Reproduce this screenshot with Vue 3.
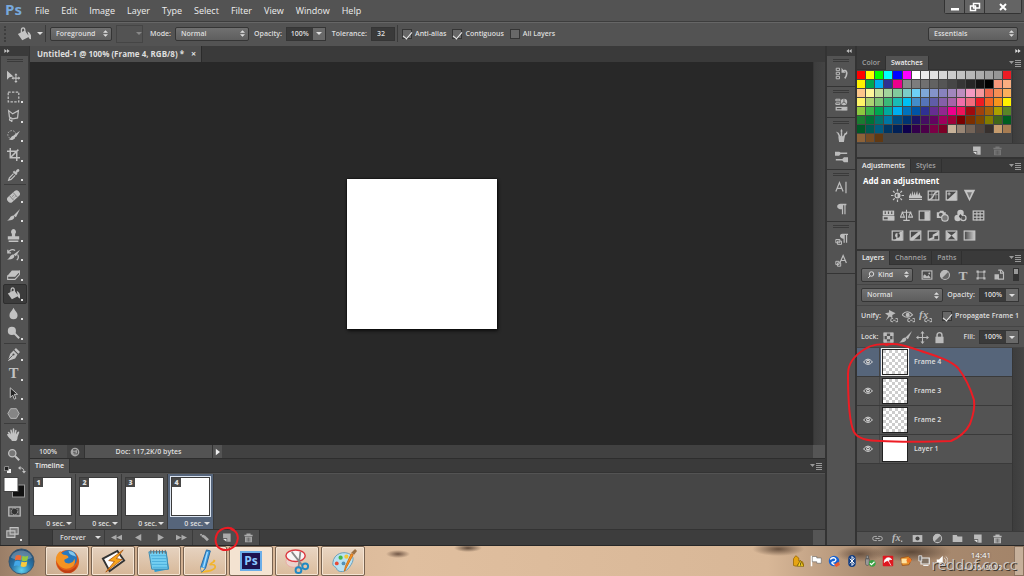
<template>
  <div class="app">
    <header class="menubar">
      <span class="brand">Ps</span>
      <nav class="menus">
        <button v-for="item in menus" :key="item">{{ item }}</button>
      </nav>
      <div class="window-buttons">
        <button aria-label="Minimize"><svg viewBox="0 0 12 10"><path d="M2 6h8v2.500H2z" fill="#fff" /></svg></button>
        <button aria-label="Restore"><svg viewBox="0 0 12 10"><path d="M4.500 1.500h6v4.500h-6zM1.500 4h5v4.500h-5z" fill="#535353" stroke="#fff" stroke-width="1.500" /></svg></button>
        <button class="close" aria-label="Close"><svg viewBox="0 0 12 10"><path d="M3 2l6 6M9 2L3 8" stroke="#fff" stroke-width="2" /></svg></button>
      </div>
    </header>

    <section class="options">
      <span class="dots"></span>
      <button class="current-tool" aria-label="Paint bucket">
        <svg viewBox="0 0 16 16" v-html="icons.bucket"></svg>
        <i class="caret"></i>
      </button>
      <span class="divider"></span>
      <span class="select source">
        <select aria-label="Fill source"><option>Foreground</option></select>
        <svg viewBox="0 0 6 8" v-html="icons.updown"></svg>
      </span>
      <button class="pattern" aria-label="Pattern" disabled><i class="caret"></i></button>
      <label for="mode">Mode:</label>
      <span class="select mode">
        <select id="mode"><option>Normal</option></select>
        <svg viewBox="0 0 6 8" v-html="icons.updown"></svg>
      </span>
      <label for="opacity">Opacity:</label>
      <span class="amount">
        <input id="opacity" v-model="opacity" type="text">
        <button aria-label="Change opacity"><i class="caret"></i></button>
      </span>
      <label for="tolerance">Tolerance:</label>
      <input id="tolerance" v-model="tolerance" class="tolerance" type="text">
      <span class="divider"></span>
      <label v-for="check in checks" :key="check.name" class="check">
        <input v-model="check.on" type="checkbox">{{ check.name }}
      </label>
      <span class="select workspace">
        <select aria-label="Workspace"><option>Essentials</option></select>
        <svg viewBox="0 0 6 8" v-html="icons.updown"></svg>
      </span>
    </section>

    <main class="workspace-area">
      <aside class="toolbar">
        <div class="panel-head left"><svg viewBox="0 0 8 6" v-html="icons.right"></svg></div>
        <span class="grip"></span>
        <div class="tools">
          <template v-for="(group, i) in tools" :key="i">
            <hr v-if="i">
            <button
              v-for="tool in group"
              :key="tool"
              :class="{ active: tool === activeTool }"
              :aria-label="tool"
              @click="activeTool = tool"
            >
              <svg viewBox="0 0 16 16" v-html="icons[tool]"></svg>
              <i class="more" :class="{ none: tool === 'move' || tool === 'zoom' }"></i>
            </button>
          </template>
        </div>
        <div class="colors">
          <div class="color-tools">
            <svg viewBox="0 0 16 16" v-html="icons.defaults"></svg>
            <svg viewBox="0 0 16 16" v-html="icons.swap"></svg>
          </div>
          <svg class="color-pair" viewBox="0 0 24 24">
            <rect x="9.500" y="8.500" width="12" height="12" fill="#111" stroke="#999" />
            <rect x="1" y="1" width="14" height="14" fill="#fff" stroke="#444" />
          </svg>
          <button aria-label="Quick mask"><svg viewBox="0 0 16 16" v-html="icons.mask"></svg></button>
          <button aria-label="Screen mode"><svg viewBox="0 0 16 16" v-html="icons.screen"></svg><i class="more"></i></button>
        </div>
      </aside>

      <section class="center">
        <div class="doc-tabs">
          <div class="doc-tab">Untitled-1 @ 100% (Frame 4, RGB/8) * <button aria-label="Close document">×</button></div>
        </div>
        <div class="document">
          <div class="stage"><div class="canvas"></div></div>
          <div class="scroll-y"></div>
        </div>
        <div class="status">
          <span class="zoom-level">100%</span>
          <svg class="status-icon" viewBox="0 0 16 16"><circle cx="8" cy="8" r="7" fill="#a5a5a5" /><path d="M5 4h5l2 2v5H6M5 6h4M5 9h4" fill="none" stroke="#555" stroke-width="1.500" /></svg>
          <span class="doc-size">Doc: 117,2K/0 bytes</span>
          <button aria-label="Status options"><svg viewBox="0 0 6 8"><path d="M1 0l5 4-5 4z" fill="#eee" /></svg></button>
          <span class="corner"></span>
        </div>

        <div class="timeline">
          <div class="tabs">
            <button class="tab on">Timeline</button>
            <svg class="menu-icon" viewBox="0 0 12 8" v-html="icons.menu"></svg>
          </div>
          <div class="frames">
            <button
              v-for="n in 4"
              :key="n"
              class="frame"
              :class="{ selected: n === activeFrame }"
              @click="activeFrame = n"
            >
              <span class="frame-thumb"><b>{{ n }}</b></span>
              <span class="delay">0 sec.<i class="caret"></i></span>
            </button>
          </div>
          <div class="playback">
            <div class="controls">
              <button class="loop">Forever <i class="caret"></i></button>
              <button v-for="name in playback" :key="name" :class="name" :aria-label="name">
                <svg viewBox="0 0 16 16" v-html="icons[name]"></svg>
                <svg v-if="name === 'page'" class="mark" viewBox="0 0 26 26">
                  <path d="M20 4C15 0 6 2 3 8C0 14 2 21 7 23C13 26 21 22 23 16C25 10 23 5 17 3" />
                </svg>
              </button>
            </div>
            <span class="corner"></span>
          </div>
        </div>
      </section>

      <aside class="dock">
        <div class="panel-head"><svg viewBox="0 0 8 6" v-html="icons.left"></svg></div>
        <div v-for="(group, i) in dock" :key="i" class="dock-group">
          <span class="grip"></span>
          <button v-for="name in group" :key="name" :aria-label="name">
            <svg viewBox="0 0 16 16" v-html="icons[name]"></svg>
          </button>
        </div>
      </aside>

      <aside class="panels">
        <div class="panel-head"><svg viewBox="0 0 8 6" v-html="icons.right"></svg></div>

        <section class="panel">
          <div class="tabs">
            <button class="tab">Color</button>
            <button class="tab on">Swatches</button>
            <svg class="menu-icon" viewBox="0 0 12 8" v-html="icons.menu"></svg>
          </div>
          <div class="swatch-area">
            <div class="swatches">
              <i v-for="(color, i) in swatches" :key="i" :style="{ background: color }"></i>
            </div>
            <div class="scroll-y"></div>
          </div>
          <div class="panel-foot">
            <button aria-label="New swatch"><svg viewBox="0 0 16 16" v-html="icons.page"></svg></button>
            <button class="dim" aria-label="Delete swatch"><svg viewBox="0 0 16 16" v-html="icons.trash"></svg></button>
          </div>
        </section>

        <section class="panel">
          <div class="tabs">
            <button class="tab on">Adjustments</button>
            <button class="tab">Styles</button>
            <svg class="menu-icon" viewBox="0 0 12 8" v-html="icons.menu"></svg>
          </div>
          <div class="adjustments">
            <h2>Add an adjustment</h2>
            <div v-for="(row, i) in adjustments" :key="i" class="adjust-row">
              <button v-for="name in row" :key="name" :aria-label="name">
                <svg viewBox="0 0 16 16" v-html="icons[name]"></svg>
              </button>
            </div>
          </div>
        </section>

        <section class="panel layers">
          <div class="tabs">
            <button class="tab on">Layers</button>
            <button class="tab">Channels</button>
            <button class="tab">Paths</button>
            <svg class="menu-icon" viewBox="0 0 12 8" v-html="icons.menu"></svg>
          </div>
          <div class="row filters">
            <span class="select kind">
              <svg class="lens" viewBox="0 0 16 16"><circle cx="9" cy="6" r="4.500" fill="none" stroke="#ddd" stroke-width="2" /><path d="M6 10l-4 4" stroke="#ddd" stroke-width="2" /></svg>
              <select aria-label="Filter type"><option>Kind</option></select>
              <svg viewBox="0 0 6 8" v-html="icons.updown"></svg>
            </span>
            <button v-for="name in filters" :key="name" :aria-label="name">
              <svg viewBox="0 0 16 16" v-html="icons[name]"></svg>
            </button>
            <span class="toggle"></span>
          </div>
          <div class="row">
            <span class="select blend">
              <select aria-label="Blend mode"><option>Normal</option></select>
              <svg viewBox="0 0 6 8" v-html="icons.updown"></svg>
            </span>
            <label class="push" for="layer-opacity">Opacity:</label>
            <span class="amount">
              <input id="layer-opacity" v-model="layerOpacity" type="text">
              <button aria-label="Change layer opacity"><i class="caret"></i></button>
            </span>
          </div>
          <div class="row">
            <span>Unify:</span>
            <button v-for="name in unify" :key="name" :aria-label="name">
              <svg viewBox="0 0 16 16" v-html="icons[name]"></svg>
            </button>
            <label class="check push"><input v-model="propagate" type="checkbox">Propagate Frame 1</label>
          </div>
          <div class="row">
            <span>Lock:</span>
            <button v-for="name in locks" :key="name" :aria-label="name">
              <svg viewBox="0 0 16 16" v-html="icons[name]"></svg>
            </button>
            <label class="push" for="fill">Fill:</label>
            <span class="amount">
              <input id="fill" v-model="fill" type="text">
              <button aria-label="Change fill"><i class="caret"></i></button>
            </span>
          </div>
          <div class="layer-area">
            <ul class="layer-list">
              <li
                v-for="layer in layers"
                :key="layer.name"
                :class="{ selected: layer.name === activeLayer }"
                @click="activeLayer = layer.name"
              >
                <button class="eye" aria-label="Visibility"><svg viewBox="0 0 16 16" v-html="icons.eye"></svg></button>
                <span class="thumb" :class="{ empty: layer.empty }"></span>
                <span>{{ layer.name }}</span>
              </li>
            </ul>
            <div class="scroll-y"></div>
            <svg class="mark layers-mark" viewBox="0 0 132 104">
              <path d="M41 5C52 2 64 7 76 11C91 16 105 20 113 28C120 37 126 50 129 60C130 67 128 76 125 84C121 92 115 97 106 101C85 102 50 102 36 101C24 101 13 99 9 92C4 82 3 50 3 34C3 23 10 15 20 9C27 4 36 4 47 4" />
            </svg>
          </div>
          <div class="panel-foot layer-foot">
            <button v-for="name in layerActions" :key="name" :aria-label="name">
              <svg viewBox="0 0 16 16" v-html="icons[name]"></svg>
            </button>
          </div>
        </section>
      </aside>
    </main>

    <footer class="taskbar">
      <button class="start" aria-label="Start">
        <svg viewBox="0 0 28 28">
          <defs>
            <radialGradient id="orb" cx=".5" cy=".85" r=".8"><stop offset="0" stop-color="#5fd0ee" /><stop offset=".5" stop-color="#2875a9" /><stop offset="1" stop-color="#244b70" /></radialGradient>
          </defs>
          <circle cx="14" cy="14" r="13" fill="url(#orb)" stroke="#38566f" />
          <path d="M3 10C6 0 22 0 25 10C18 13 10 13 3 10z" fill="#fff" opacity=".25" />
          <path d="M8 8c2-1 4-1 6 0l-1 5c-2-1-4-1-6 0z" fill="#ee6835" />
          <path d="M15 8c2 1 4 1 6 0l-1 5c-2 1-4 1-6 0z" fill="#95c83d" />
          <path d="M7 14c2-1 4-1 6 0l-1 5c-2-1-4-1-6 0z" fill="#43a8e8" />
          <path d="M14 14c2 1 4 1 6 0l-1 5c-2 1-4 1-6 0z" fill="#fbc93c" />
        </svg>
      </button>
      <button v-for="name in programs" :key="name" class="program" :class="{ current: name === 'photoshop' }" :aria-label="name">
        <span v-if="name === 'photoshop'" class="ps-tile">Ps</span>
        <svg v-else viewBox="0 0 28 28" v-html="programIcons[name]"></svg>
      </button>
      <div class="tray">
        <svg v-for="(icon, i) in trayIcons" :key="i" viewBox="0 0 16 16" v-html="icon"></svg>
        <time class="clock">14:41<br>14/06/2012</time>
        <span class="show-desktop"></span>
        <span class="watermark">reddof.co.cc</span>
      </div>
    </footer>
  </div>
</template>

<script setup>
  import { ref } from 'vue';

  const menus = ['File', 'Edit', 'Image', 'Layer', 'Type', 'Select', 'Filter', 'View', 'Window', 'Help'];

  const opacity = ref('100%');
  const tolerance = ref('32');
  const layerOpacity = ref('100%');
  const fill = ref('100%');
  const propagate = ref(true);
  const activeTool = ref('bucket');
  const activeFrame = ref(4);
  const activeLayer = ref('Frame 4');

  const checks = ref([
    { name: 'Anti-alias', on: true },
    { name: 'Contiguous', on: true },
    { name: 'All Layers', on: false }
  ]);

  const tools = [
    ['move', 'marquee', 'lasso', 'quick', 'crop', 'dropper'],
    ['heal', 'brush', 'stamp', 'history', 'eraser', 'bucket', 'blur', 'dodge'],
    ['pen', 'type', 'arrow', 'shape'],
    ['hand', 'zoom']
  ];
  const playback = ['first', 'prev', 'play', 'last', 'tween', 'page', 'trash'];
  const dock = [
    ['historyPanel'],
    ['properties'],
    ['brushes', 'presets'],
    ['character', 'paragraph'],
    ['paragraphStyles', 'characterStyles']
  ];
  const adjustments = [
    ['sun', 'levels', 'curves', 'exposure', 'vibrance'],
    ['hue', 'balance', 'blackWhite', 'photoFilter', 'mixer', 'lookup'],
    ['invert', 'posterize', 'threshold', 'selective', 'gradient']
  ];
  const filters = ['image', 'adjust', 'type', 'vector', 'smart'];
  const unify = ['unifyPosition', 'unifyEye', 'unifyFx'];
  const locks = ['checker', 'brush', 'cross', 'lock'];
  const layerActions = ['link', 'fx', 'addMask', 'adjust', 'folder', 'page', 'trash'];

  const layers = [
    { name: 'Frame 4', empty: true },
    { name: 'Frame 3', empty: true },
    { name: 'Frame 2', empty: true },
    { name: 'Layer 1', empty: false }
  ];

  const swatches = `
    ff0000 ffff00 00ff00 00ffff 0000ff ff00ff ffffff ebebeb e1e1e1 d7d7d7 cccccc c2c2c2 b7b7b7 acacac a0a0a0 959595 ed1c24
    fff200 00a651 00aeef 2e3192 ec008c 898989 7d7d7d 707070 626262 555555 464646 363636 262626 111111 000000 f7977a f9ad81
    fdc68a fff79a c4df9b a2d39c 82ca9d 7bcdc8 6ecff6 7ea7d8 8493ca 8882be a187be bc8dbf f49ac2 f6989d f26c4f f68e55 fbaf5c
    fff467 acd372 7cc576 3bb878 1abbb4 00bff3 438cca 5574b9 605ca8 855fa8 a763a8 f06ea9 f26d7d ed1c24 f26522 f7941d fff200
    8dc73f 39b54a 00a651 00a99d 00aeef 0072bc 0054a6 2e3192 662d91 92278f ec008c ed145b 9e0b0f a0410d a36209 aba000 598527
    1a7b30 007236 00746b 0076a3 004b80 003471 1b1464 440e62 630460 9e005d 9e0039 790000 7b2e00 7d4900 827b00 406618 005e20
    005826 005952 005b7f 003663 002157 0d004c 32004b 4b0049 7b0046 7a0026 c7b299 998675 736357 534741 37302d c69c6d a67c52
    8c6239 754c24 603913
  `.trim().split(/\s+/).map((hex) => `#${hex}`);

  const line = (d, width = 1.5) => `<path d="${d}" fill="none" stroke="currentColor" stroke-width="${width}"/>`;
  const solid = (d) => `<path d="${d}" fill="currentColor"/>`;
  const box = '<rect x="1.500" y="2.500" width="13" height="11" fill="#4a4a4a" stroke="currentColor" stroke-width="1.500"/>';
  const links = '<path d="M10 10.500h-1a2 2 0 0 0 0 4h1M13 10.500h1a2 2 0 0 1 0 4h-1M10 12.500h3" fill="none" stroke="currentColor" stroke-width="1.300"/>';
  const glyph = (text, x, y, size, style = '') =>
    `<text x="${x}" y="${y}" font-size="${size}" fill="currentColor" ${style}>${text}</text>`;

  const icons = {
    updown: solid('M0 3l3-3 3 3zM0 5l3 3 3-3z'),
    right: solid('M0 0l4 3-4 3zM4 0l4 3-4 3z'),
    left: solid('M4 0L0 3l4 3zM8 0L4 3l4 3z'),
    menu: solid('M0 2h5L2.500 5z') + line('M6 1.500h6M6 3.500h6M6 5.500h6M6 7.500h6', 1),
    move: solid('M0 1v11l3-3 5-1z') + line('M11 6v8M7 10h8', 1.3) + solid('M11 4l2 2.500H9zM11 16l2-2.500H9zM5.500 10L8 8v4zM16.500 10L14 8v4z'),
    marquee: '<rect x="1.500" y="2.500" width="13" height="12" fill="none" stroke="currentColor" stroke-width="1.500" stroke-dasharray="3 1.600"/>',
    lasso: line('M2 2l5 4 7-4-1 9-6 1-4-2zM5 11c-3 1-2 4 0 3s1 2 0 2'),
    quick: '<circle cx="6" cy="7" r="5" fill="none" stroke="currentColor" stroke-dasharray="2 1.500"/>' + solid('M16 2l-5 8-3-2zM9 8c3 3-1 7-7 5 3-1 3-5 7-5z'),
    crop: line('M4 0v12h12M0 4h12v12M4 12L14 2', 1.8),
    dropper: solid('M10 5l2-3c2-2 4 0 3 2l-3 2 1 1-2 2-4-4 2-2z') + line('M8 7l-5 5-1 3 3-1 5-5'),
    heal: '<g transform="rotate(-42 8 8)"><rect x="-1" y="4" width="18" height="8" rx="3.500" fill="currentColor"/><path d="M5 4v8M11 4v8" stroke="#777"/><path d="M7 7h.8M9 7h.8M7 9.500h.8M9 9.500h.8" stroke="#444"/></g>',
    brush: solid('M16 0l-5 10-3-2zM8 8c3 3-1 7-8 6 4-1 3-6 8-6z'),
    stamp: solid('M8 0a3.500 3.500 0 0 1 2 6v3h5v4H1V9h5V6a3.500 3.500 0 0 1 2-6zM2 14h12v2H2z'),
    history: solid('M16 2l-5 8-3-2zM8 8c3 3-1 7-8 6 4-1 3-6 8-6z') + line('M1 6c2-4 6-5 9-3M1 2v4h4M13 8c2 3 1 5-1 7'),
    eraser: solid('M6 3h10l-6 7H0z') + line('M.8 10h9l5.500-6v4l-5.500 6h-9z', 1.3),
    bucket: solid('M1 8l8-4 5 7-8 4zM12 5c3 1 5 5 4 9-2 0-3-2-3-5z') + line('M5 8V4c0-4 4-4 4 0v4', 1.4),
    blur: solid('M8 1c2 4 5 6 5 9a5 5 0 0 1-10 0c0-3 3-5 5-9z'),
    dodge: '<circle cx="6" cy="6" r="5" fill="currentColor"/>' + line('M9 9l6 6', 2.5),
    pen: solid('M11 0l5 5-2 2-5-5zM8 3l5 5-3 5-9 3 3-9z') + '<path d="M1 15l6-6" stroke="#4a4a4a"/><circle cx="8" cy="8" r="1.300" fill="#4a4a4a"/>',
    type: glyph('T', 8, 14, 18, 'text-anchor="middle" font-family="Liberation Serif, serif"'),
    arrow: '<path d="M4 1v12l3-3 2 5 2-1-2-5h4z" fill="#222" stroke="currentColor" stroke-width="1.200"/>',
    shape: '<path d="M4.500 2h7L15 8l-3.500 6h-7L1 8z" fill="#858585" stroke="currentColor"/>',
    hand: solid('M4 9L1 6c0-2 2-2 4 2L4 3c0-1.500 1.500-1.500 2 0l1 4V1.500c0-1.500 2-1.500 2 0V7l1-4c.5-1.500 2-1 1.800.5L11 8l2-3c1-1.500 2.500-.5 2 .5L13 11c0 3-1 4-2 5H6c0-2-4-3-6-8 1-1 3-.5 4 1z'),
    zoom: '<circle cx="6.500" cy="6.500" r="4.500" fill="#777" stroke="currentColor" stroke-width="1.500"/>' + line('M10 10l5 5', 2.5),
    defaults: '<rect x="6" y="6" width="8" height="8" fill="#eee"/><rect x="1.500" y="1.500" width="8" height="8" fill="#222" stroke="#ccc"/>',
    swap: line('M4 4c5-1 8 2 8 8', 1.8) + solid('M0 4l5-4v8zM8 10h8l-4 5z'),
    mask: '<rect x="1" y="2.500" width="14" height="11" fill="#555" stroke="currentColor" stroke-width="1.500"/><circle cx="8" cy="8" r="4" fill="#333" stroke="currentColor" stroke-dasharray="2 1"/>',
    screen: '<path d="M1 6h10v8H1zM5 2h10v8H5z" fill="#777" stroke="currentColor" stroke-width="1.300"/>',
    first: solid('M8 4v8L0 8zM16 4v8L8 8z'),
    prev: solid('M12 3v10L3 8z'),
    play: solid('M4 3v10l9-5z'),
    last: solid('M0 4v8l8-4zM8 4v8l8-4z'),
    tween: '<circle cx="3" cy="4" r="1.500" fill="currentColor"/><circle cx="6" cy="6" r="2" fill="currentColor"/>' + line('M7 6l6 6', 4),
    page: solid('M3 2h11v12H9V9H3z') + '<path d="M3 10h5v4z" fill="#ddd"/>',
    trash: solid('M2 4h12v2H2zM5 2h6v2H5zM3 7h10v8H3z') + '<path d="M6 8v6M8 8v6M10 8v6" stroke="#555"/>',
    historyPanel: line('M1.500 1.500h4v3h-4zM1.500 6.500h4v3h-4zM1.500 11.500h4v3h-4z', 1.2) + line('M9 5c6-3 7 4 3 9', 2) + solid('M8 1v6h5z'),
    properties: line('M1 1.500h5v2H1zM1 6h5v2H1z', 1.2) + '<circle cx="11" cy="5" r="4" fill="currentColor"/><path d="M11 5V1M11 5l-3 2M11 5l3 2" stroke="#555"/>' + line('M1.500 11.500h13v3h-13z') + solid('M8 12h6v3H8z'),
    brushes: solid('M4 9h8l-1 7H5zM8 0c2 2 1 4 0 5-1-1-2-3 0-5zM1 3l4 2v3zM15 2v4l-4 2z') + line('M8 4v6M4 6l3 5M13 5l-3 6', 1.8),
    presets: solid('M0 2h5l2 1h8v2H7L5 7H0zM16 9h-5l-2 2H1v2h8l2 2h5z'),
    character: line('M1 13L5.500 2 10 13M3 9h5M13.500 1v14'),
    paragraph: solid('M7 2h7v2h-1v11h-1.500V4H10v11H8.500V9C1 9 1 2 7 2z'),
    paragraphStyles: solid('M9 1h7v1.500h-1V12h-1.500V2.500H12V12h-1.500V7C5 7 5 1 9 1z') + line('M1 8h5v4H1zM3 10h5v4H3z', 1.2),
    characterStyles: line('M6 11l4-9 4 9M8 8h5') + line('M1 9h4v4H1zM3 11h4v4H3z', 1.2),
    sun: '<circle cx="8" cy="8" r="3" fill="#555" stroke="currentColor" stroke-width="1.500"/>' + solid('M8 5v6a3 3 0 0 0 0-6') + line('M8 0v3M8 13v3M0 8h3M13 8h3M2.500 2.500l2 2M11.500 11.500l2 2M2.500 13.500l2-2M11.500 4.500l2-2'),
    levels: solid('M0 11V9l2-4 1 4 1-7 1.500 6L7 3l1 5 2-6 1 6 2-4 1 4 2 1v2zM0 12h16v1.500H0z'),
    curves: box + line('M2 7h12M6 3v11M11 3v11', .7) + line('M2 13c8 0 4-10 12-10', 1.7),
    exposure: box + solid('M14 3v11H2z') + line('M3 6h4M5 4v4', 1.2),
    vibrance: solid('M1 1h14L8 15z') + '<path d="M5 4h6l-3 7z" fill="#777"/>',
    hue: solid('M1 2h14v6H1z') + '<path d="M4 3v3M8 3v3M12 3v3" stroke="#555" stroke-width="1.500"/>' + line('M1.500 9.500h13v4h-13z') + solid('M7 9h8v5H7z'),
    balance: line('M8 1v13M2 4h12M4 14h8M3 4l-2.500 6h5zM13 4l-2.500 6h5z', 1.3),
    blackWhite: box + solid('M8 3h6v11H8z'),
    photoFilter: solid('M1 4h3l1-2h4l1 2h2v7H1z') + '<circle cx="6" cy="7" r="2.500" fill="#555"/><circle cx="11" cy="11" r="4" fill="#777" stroke="currentColor" stroke-width="1.500"/>',
    mixer: '<circle cx="8" cy="5" r="4" fill="currentColor"/><circle cx="4.500" cy="11" r="4" fill="currentColor"/><circle cx="11.500" cy="11" r="3.300" fill="#555" stroke="currentColor" stroke-width="1.500"/><path d="M8 6l2 3-2 3-2-3z" fill="#444"/>',
    lookup: box + line('M2 6h12M2 10h12M6 3v11M10 3v11', 1.3),
    invert: box + solid('M2 14C10 14 5 4 14 3v11z') + '<circle cx="8" cy="8" r="3" fill="currentColor"/><path d="M8 5a3 3 0 0 1 0 6z" fill="#444"/>',
    posterize: box + solid('M2 11L12 3h2v3L5 14H2z'),
    threshold: box + solid('M2 12l5-2V7l7-4v5l-5 1v3l-6 2z'),
    selective: box + solid('M2 3l6 5-6 6zM14 3L8 8l6 6z'),
    gradient: '<defs><linearGradient id="fade"><stop stop-color="#444"/><stop offset="1" stop-color="#ccc"/></linearGradient></defs><rect x="1.500" y="2.500" width="13" height="11" fill="url(#fade)" stroke="currentColor" stroke-width="1.500"/>',
    image: box + solid('M3 12V9l2-2 3 3 2-2 3 4z') + '<circle cx="11" cy="6" r="1.200" fill="currentColor"/>',
    adjust: '<circle cx="8" cy="8" r="6" fill="#666" stroke="currentColor" stroke-width="1.500"/>' + solid('M12.500 3.500A6 6 0 1 0 3.500 12.500z'),
    vector: line('M4 4h8v8H4z', 1.3) + solid('M2 2h3v3H2zM11 2h3v3h-3zM2 11h3v3H2zM11 11h3v3h-3z'),
    smart: line('M7 1.500h4l3 3v9H7M10 1.500v4h4') + solid('M2 7h6v7H2z'),
    unifyPosition: solid('M5 0l8 4-4 2v4L6 8l-5 5 3-6-4-3 5-1z') + links,
    unifyEye: line('M0 6c4-5 9-5 13 0-4 4-9 4-13 0z', 1.3) + '<circle cx="7" cy="6" r="2.500" fill="currentColor"/>' + links,
    unifyFx: glyph('fx', 0, 10, 14, 'font-style="italic" font-family="Liberation Serif, serif"') + links,
    checker: line('M2.500 2.500h11v11h-11z', 1.3) + solid('M2 2h4v4H2zM10 2h4v4h-4zM6 6h4v4H6zM2 10h4v4H2zM10 10h4v4h-4z'),
    cross: line('M8 2v12M2 8h12', 1.3) + solid('M8 0l2.500 3h-5zM8 16l2.500-3h-5zM0 8l3-2.500v5zM16 8l-3-2.500v5z'),
    lock: solid('M3 7h10v8H3z') + line('M5 8V5c0-4 6-4 6 0v3', 1.8),
    eye: line('M1 8c4-6 10-6 14 0-4 5-10 5-14 0z') + '<circle cx="8" cy="7.500" r="3" fill="currentColor"/><circle cx="8" cy="7" r="1.200" fill="#333"/>',
    link: line('M7 5H4a3 3 0 0 0 0 6h3M9 5h3a3 3 0 0 1 0 6H9M5 8h6', 1.3),
    fx: glyph('fx', 0, 12, 15, 'font-style="italic" font-family="Liberation Serif, serif"') + solid('M13 11h2v2h-2z'),
    addMask: solid('M1 3h14v10H1z') + '<circle cx="8" cy="8" r="3" fill="#444"/>',
    folder: solid('M1 3h6l1 2h7v8H1z')
  };

  const programs = ['firefox', 'winamp', 'notepad', 'pencil', 'photoshop', 'snipping', 'paint'];

  const programIcons = {
    firefox: '<circle cx="14" cy="14" r="12" fill="#df5b18"/><circle cx="15" cy="11" r="9" fill="#2878bd"/><path d="M15 3c5 0 7 3 8 6-3-2-7-1-8-6z" fill="#85c7ec"/><path d="M2 12C2 7 5 4 7 3c0 2 1 3 3 4 3 0 5 1 5 3l-4 2c-1 2 1 4 4 4 4 0 6-3 6-5 2 4 0 9-5 10-6 2-12-2-14-9z" fill="#f39323"/><path d="M3 15c2 9 15 12 21 2-1 6-5 9-10 9S4 22 3 15z" fill="#bd3f16"/>',
    winamp: '<path d="M3 11L18 3l7 10-15 11z" fill="#fff" stroke="#333" stroke-width="2"/><path d="M24 2L9 13l6 1-9 11 17-13-6-1z" fill="#f9a51a" stroke="#a8500a" stroke-width=".8"/>',
    notepad: '<path d="M5 4l16-1 3 19-15 3z" fill="#2f9bcf"/><path d="M3 4h18l2 18H6z" fill="#74cff1" stroke="#3d88ad"/><path d="M5 8h16M6 11h15M6 14h15M6 17h16M7 20h15" stroke="#3098cf" stroke-width=".6"/><path d="M5 2v4M8 2v4M11 2v4M14 2v4M17 2v4M20 2v4" stroke="#666"/>',
    pencil: '<path d="M9 25c8-1 16-2 15-6s-8 0-4-3 4-3 2-3" fill="none" stroke="#f2b52d" stroke-width="1.800"/><path d="M15 2l4 1-5 18-4 4-1-5z" fill="#3e9de0" stroke="#2469a5"/><path d="M16 4l-4 16" stroke="#a5dcff" stroke-width="1.500"/><path d="M9 20l4 1-3 4z" fill="#eed0a0"/>',
    snipping: '<ellipse cx="10" cy="14" rx="8" ry="6" fill="#ecd3cc" stroke="#e8aba2"/><ellipse cx="12" cy="8" rx="10" ry="6" fill="#f8f5f5" stroke="#dc3940" stroke-width="1.500"/><path d="M8 4l11 14M17 4l-2 16" stroke="#888" stroke-width="1.800"/><circle cx="22" cy="19" r="3" fill="none" stroke="#2089c4" stroke-width="2"/><circle cx="15" cy="23" r="3" fill="none" stroke="#2089c4" stroke-width="2"/>',
    paint: '<path d="M3 15C4 6 14 2 22 7c4 4 1 9-2 13-3 5-11 6-13 2 0-3-5-2-4-7z" fill="#b9e1f2" stroke="#689eb9"/><circle cx="7" cy="16" r="2" fill="#e64b38"/><circle cx="11" cy="10" r="2.200" fill="#42b84c"/><circle cx="17" cy="9" r="2.200" fill="#f2c737"/><circle cx="14" cy="16" r="2" fill="#5591b5"/><path d="M24 7l-9 17 1-5 6-13z" fill="#f6972b" stroke="#d37014"/><path d="M22 5l4-4 2 2-3 4z" fill="#9b7043"/>'
  };

  const trayIcons = [
    '<path d="M2 14V5l3-4 4 3v4l5 1 2 5H9v-3l-3 4z" fill="#e6a412" stroke="#956600"/><path d="M11 7l5 8H7z" fill="#ffda25" stroke="#7a5b00"/><path d="M11.500 10v4" stroke="#222"/>',
    '<path d="M2 1v14" stroke="#fff" stroke-width="2"/><path d="M3 2h6v2h6v7H9V9H3z" fill="#fff" stroke="#555" stroke-width=".7"/>',
    '<circle cx="8" cy="8" r="7" fill="#1762d2"/><path d="M3 6c5-6 11 1 5 3-3 0-5 2 1 4" fill="none" stroke="#fff" stroke-width="1.800"/><path d="M8 13l6-4 2 4-5 3z" fill="#eb582e"/>',
    '<rect x="3" width="10" height="16" rx="5" fill="#153f83"/><path d="M5 5l6 6-3 3V2l3 3-6 6" fill="none" stroke="#fff" stroke-width="1.300"/>',
    '<path d="M2 5h5v6c0 4-5 4-5 0zM3 1h3v4H3z" fill="#999" stroke="#555"/><circle cx="11" cy="11" r="4.500" fill="#38a142"/><path d="M8 11l2 2 4-4" fill="none" stroke="#fff" stroke-width="1.500"/>',
    '<rect x="1" y="1" width="14" height="14" rx="1" fill="#df171f"/><path d="M3 10c0-7 7-8 10-4-4 0-4 1-4 2-2-1-4 0-6 2zM8 7l4 7" fill="#fff" stroke="#fff"/>',
    '<path d="M1 4l10-2 4 4-3 7-9 1z" fill="#e79531" stroke="#9b4e11"/><rect x="2" y="5" width="7" height="6" fill="#ffe2a0"/><circle cx="12" cy="7" r="3" fill="#f37520"/>',
    '<path d="M4 4h11v8H4zM7 14h7" fill="#817263" stroke="#eee" stroke-width="1.500"/><path d="M1 1v7h4V1z" fill="#777" stroke="#eee"/>',
    '<path d="M1 6h3l5-5v14l-5-5H1z" fill="#fff"/><path d="M11 4c3 2 3 6 0 8M13 2c4 3 4 9 0 12" fill="none" stroke="#eee"/>'
  ];
</script>

<style>
  html, body {
    margin: 0;
    background: #535353;
  }
</style>

<style scoped>
  .app {
    display: flex;
    flex-direction: column;
    min-height: 100vh;
    color: #dedede;
    font: 600 7px/10px "Open Sans", "Noto Sans", sans-serif;
    background: #535353;
  }
  .app * {
    box-sizing: border-box;
  }
  button, select, input {
    margin: 0;
    padding: 0;
    border: 0;
    border-radius: 0;
    color: inherit;
    font: inherit;
    background: none;
    appearance: none;
  }
  button {
    display: flex;
    align-items: center;
    justify-content: center;
  }
  svg {
    display: block;
    flex: none;
  }
  .caret {
    flex: none;
    border: 3px solid transparent;
    border-top-color: currentColor;
    border-bottom: 0;
  }

  .menubar {
    display: flex;
    height: 22px;
    border-bottom: 1px solid #3d3d3d;
  }
  .brand {
    width: 35px;
    padding-left: 5px;
    color: #78a9dc;
    font: 700 15px/19px "Open Sans", sans-serif;
  }
  .menus {
    display: flex;
    gap: 12px;
    font-size: 9px;
    font-weight: 400;
    color: #eee;
  }
  .window-buttons {
    display: flex;
    height: 14px;
    margin: 0 2px 0 auto;
    border: 1px solid #333;
    border-top: 0;
    border-radius: 0 0 3px 3px;
  }
  .window-buttons button {
    width: 20px;
    border-right: 1px solid #333;
    background: #646464;
  }
  .window-buttons .close {
    width: 36px;
    border-right: 0;
  }
  .window-buttons svg {
    width: 12px;
    height: 10px;
  }

  .options {
    display: flex;
    align-items: center;
    height: 24px;
    padding: 0 6px 2px 4px;
    border-top: 1px solid #666;
  }
  .options label {
    margin-right: 4px;
  }
  .dots {
    width: 2px;
    height: 16px;
    margin-right: 10px;
    border-left: 2px dotted #3e3e3e;
  }
  .current-tool {
    gap: 6px;
    width: 27px;
  }
  .current-tool svg {
    width: 14px;
    height: 14px;
    color: #c4c4c4;
  }
  .divider {
    height: 17px;
    margin: 0 4px 0 2px;
    border-left: 1px solid #3b3b3b;
  }
  .select {
    display: flex;
    align-items: center;
    height: 14px;
    padding: 0 3px 0 5px;
    border: 1px solid #353535;
    border-radius: 2px;
    background: linear-gradient(#707070, #5e5e5e);
  }
  .select select {
    flex: 1;
    min-width: 0;
    height: 12px;
  }
  .select svg {
    width: 5px;
    height: 7px;
  }
  .source {
    width: 62px;
    margin-right: 4px;
  }
  .mode {
    width: 74px;
    margin-right: 5px;
  }
  .pattern {
    justify-content: flex-end;
    width: 27px;
    height: 18px;
    margin-right: 7px;
    color: #888;
    border: 1px solid #454545;
  }
  .amount {
    display: flex;
    height: 14px;
    margin-right: 6px;
    border: 1px solid #353535;
  }
  .amount input {
    width: 26px;
    text-align: center;
    background: #3a3a3a;
  }
  .amount button {
    width: 12px;
    background: #696969;
  }
  .tolerance {
    width: 24px;
    height: 14px;
    padding-left: 5px;
    border: 1px solid #353535;
    background: #3a3a3a;
  }
  .check {
    display: flex;
    align-items: center;
    gap: 3px;
  }
  .options .check {
    margin-right: 6px;
  }
  .check input {
    display: grid;
    place-items: center;
    width: 10px;
    height: 10px;
    border: 1px solid #353535;
    background: #686868;
  }
  .check input:checked::before {
    content: "";
    width: 4px;
    height: 8px;
    margin-bottom: 3px;
    border: solid #eee;
    border-width: 0 1px 1px 0;
    rotate: 40deg;
  }
  .workspace {
    width: 90px;
    margin-left: auto;
  }

  .workspace-area {
    display: flex;
    flex: 1;
    background: #333;
  }
  .panel-head {
    display: flex;
    align-items: center;
    justify-content: flex-end;
    height: 10px;
    padding: 0 3px;
    background: #3a3a3a;
  }
  .panel-head.left {
    justify-content: flex-start;
    align-self: stretch;
  }
  .panel-head svg {
    width: 6px;
    height: 4px;
  }
  .grip {
    width: 16px;
    height: 3px;
    margin: 3px auto;
    border: solid #3a3a3a;
    border-width: 1px 0;
  }
  .scroll-y {
    width: 12px;
    border-left: 1px solid #363636;
    background: linear-gradient(90deg, #3d3d3d, #444);
  }
  .corner {
    width: 12px;
    margin-left: auto;
    background: #555;
  }

  .toolbar {
    display: flex;
    flex-direction: column;
    align-items: center;
    width: 29px;
    border: solid #3a3a3a;
    border-width: 0 1px;
    background: #535353;
    color: #c2c2c2;
  }
  .tools {
    display: flex;
    flex: 1;
    flex-direction: column;
    width: 24px;
    padding-top: 2px;
  }
  .tools button {
    flex: 1;
    align-items: center;
    padding-left: 2px;
    border: 1px solid transparent;
    border-radius: 2px;
  }
  .tools .active {
    border-color: #2e2e2e;
    background: #3b3b3b;
  }
  .tools svg, .colors button svg {
    width: 13px;
    height: 13px;
  }
  .tools hr {
    width: 22px;
    height: 1px;
    margin: 0 1px 1px;
    border: 0;
    background: #3c3c3c;
  }
  .more {
    align-self: flex-end;
    width: 2px;
    height: 2px;
    margin: 0 1px 2px;
    background: #ddd;
  }
  .more.none {
    background: none;
  }
  .colors {
    display: flex;
    flex-direction: column;
    align-items: center;
    height: 81px;
  }
  .color-tools {
    display: flex;
    gap: 6px;
    height: 12px;
    align-items: center;
  }
  .color-tools svg {
    width: 8px;
    height: 8px;
  }
  .color-pair {
    width: 24px;
    height: 25px;
  }
  .colors button {
    height: 21px;
    width: 22px;
  }

  .center {
    display: flex;
    flex: 1;
    flex-direction: column;
    min-width: 0;
    margin: 0 2px 0 1px;
  }
  .doc-tabs {
    display: flex;
    height: 16px;
    background: #3a3a3a;
  }
  .doc-tab {
    display: flex;
    align-items: center;
    gap: 7px;
    padding: 0 5px 0 7px;
    border-right: 1px solid #2b2b2b;
    background: #4d4d4d;
    font-size: 8px;
    font-weight: 700;
  }
  .doc-tab button {
    font-size: 9px;
  }
  .document {
    display: flex;
    flex: 1;
  }
  .stage {
    display: grid;
    flex: 1;
    place-items: center;
    background: #282828;
  }
  .canvas {
    width: 150px;
    height: 150px;
    background: #fff;
    box-shadow: 0 0 2px #000, 1px 2px 3px #111;
  }
  .status {
    display: flex;
    align-items: center;
    height: 14px;
    background: #414141;
    border-bottom: 1px solid #2d2d2d;
  }
  .zoom-level {
    width: 37px;
    padding-left: 9px;
    background: #4b4b4b;
    line-height: 13px;
  }
  .status-icon {
    width: 10px;
    height: 10px;
    margin: 0 4px 0 3px;
  }
  .doc-size {
    width: 129px;
    border: solid #333;
    border-width: 0 1px;
    background: #535353;
    line-height: 13px;
    text-align: center;
  }
  .status button {
    width: 9px;
    height: 13px;
    background: #535353;
  }
  .status button svg {
    width: 5px;
    height: 8px;
  }
  .status .corner, .playback .corner {
    align-self: stretch;
  }

  .tabs {
    display: flex;
    height: 14px;
    background: #3a3a3a;
    border-bottom: 1px solid #333;
  }
  .tab {
    padding: 0 5px;
    border-right: 1px solid #303030;
    color: #a0a0a0;
    height: 14px;
  }
  .tab.on {
    background: #535353;
    color: #eee;
  }
  .menu-icon {
    width: 12px;
    height: 8px;
    margin: 3px 3px 0 auto;
    color: #999;
  }

  .timeline {
    background: #464646;
  }
  .frames {
    display: flex;
    height: 56px;
    border-top: 1px solid #535353;
  }
  .frame {
    flex-direction: column;
    width: 46px;
    padding-top: 1px;
    border-right: 1px solid #3a3a3a;
    background: #535353;
  }
  .frame.selected {
    background: #56657b;
  }
  .frame-thumb {
    display: flex;
    width: 39px;
    height: 39px;
    margin-top: 1px;
    background: #fff;
    border: 1px solid #3b3b3b;
  }
  .selected .frame-thumb {
    outline: 1px solid #dce5f1;
  }
  .frame-thumb b {
    width: 9px;
    height: 9px;
    background: #484848;
    line-height: 9px;
  }
  .delay {
    display: flex;
    align-items: center;
    gap: 1px;
    margin: 3px 3px 0 auto;
  }
  .playback {
    display: flex;
    height: 16px;
    border-top: 1px solid #333;
    background: #3d3d3d;
  }
  .controls {
    display: flex;
    margin-left: 22px;
    border: solid #333;
    border-width: 0 1px;
    background: #4e4e4e;
  }
  .controls button {
    position: relative;
    width: 22px;
    color: #aaa;
  }
  .controls svg {
    width: 11px;
    height: 11px;
  }
  .controls .loop {
    justify-content: space-between;
    width: 52px;
    padding: 0 3px 0 7px;
    border-right: 1px solid #3b3b3b;
    color: #dedede;
  }
  .controls .last {
    border-right: 1px solid #3b3b3b;
  }
  .mark {
    position: absolute;
    z-index: 2;
    overflow: visible;
    fill: none;
    stroke: #ed1c24;
    stroke-width: 2;
    stroke-linecap: round;
    pointer-events: none;
  }
  .controls .mark {
    left: -1px;
    top: -4px;
    width: 26px;
    height: 26px;
  }

  .dock {
    width: 28px;
    margin-right: 2px;
    background: #535353;
    color: #bcbcbc;
  }
  .dock-group {
    display: flex;
    flex-direction: column;
    padding-bottom: 2px;
    border-bottom: 1px solid #343434;
  }
  .dock-group .grip {
    margin-bottom: 1px;
  }
  .dock-group button {
    height: 21px;
  }
  .dock-group svg {
    width: 13px;
    height: 13px;
  }

  .panels {
    display: flex;
    flex-direction: column;
    width: 167px;
  }
  .panel {
    margin-bottom: 2px;
    background: #535353;
  }
  .swatch-area {
    display: flex;
    height: 73px;
    background: #464646;
  }
  .swatches {
    display: grid;
    flex: 1;
    grid-template-columns: repeat(17, 1fr);
    grid-auto-rows: 8px;
    gap: 1px;
    align-content: start;
    padding: 1px 1px 0 0;
  }
  .panel-foot {
    display: flex;
    align-items: center;
    justify-content: flex-end;
    gap: 10px;
    height: 14px;
    padding-right: 21px;
    border-top: 1px solid #3b3b3b;
    color: #bbb;
  }
  .panel-foot svg {
    width: 11px;
    height: 11px;
  }
  .dim {
    color: #777;
  }
  .adjustments {
    height: 76px;
    padding: 3px 0 0 6px;
  }
  .adjustments h2 {
    margin: 0;
    color: #fff;
    font-size: 8px;
    font-weight: 700;
    line-height: 9px;
  }
  .adjust-row {
    display: flex;
    justify-content: center;
    height: 20px;
    padding-right: 20px;
    color: #c4c4c4;
  }
  .adjust-row button {
    width: 18px;
  }
  .adjust-row svg {
    width: 13px;
    height: 13px;
  }

  .layers {
    display: flex;
    flex: 1;
    flex-direction: column;
    margin: 0;
  }
  .row {
    display: flex;
    align-items: center;
    gap: 4px;
    height: 21px;
    padding: 0 5px 0 4px;
    border-bottom: 1px solid #454545;
  }
  .row button svg {
    width: 13px;
    height: 13px;
    color: #bbb;
  }
  .row .amount {
    margin: 0;
  }
  .push {
    margin-left: auto;
  }
  .row.check {
    padding-right: 7px;
  }
  .filters {
    gap: 6px;
    height: 20px;
  }
  .select.kind {
    width: 52px;
    margin-right: 2px;
  }
  .kind .lens {
    width: 8px;
    height: 8px;
    margin-right: 3px;
  }
  .filters button svg {
    width: 12px;
    height: 12px;
  }
  .toggle {
    width: 6px;
    height: 13px;
    margin-left: auto;
    border: 1px solid #333;
    background: linear-gradient(#999 50%, #333 50%);
  }
  .blend {
    width: 82px;
  }
  .layer-area {
    position: relative;
    display: flex;
    flex: 1;
    background: #464646;
  }
  .layer-list {
    flex: 1;
    margin: 0;
    padding: 0;
    list-style: none;
  }
  .layer-list li {
    display: flex;
    align-items: center;
    gap: 6px;
    height: 29px;
    border-bottom: 1px solid #3a3a3a;
    background: #535353;
  }
  .layer-list .selected {
    background: #56657a;
  }
  .eye {
    align-self: stretch;
    width: 23px;
    margin-right: -4px;
    border-right: 1px solid #454545;
  }
  .eye svg {
    width: 10px;
    height: 10px;
  }
  .thumb {
    width: 26px;
    height: 26px;
    border: 1px solid #222;
    background: #fff;
  }
  .thumb.empty {
    background: repeating-conic-gradient(#fff 0 25%, #ccc 0 50%) 0 0 / 6px 6px;
  }
  .selected .thumb {
    outline: 1px solid #eee;
  }
  .layers-mark {
    left: -12px;
    top: -8px;
    width: 132px;
    height: 104px;
  }
  .layer-foot {
    gap: 9px;
  }

  .taskbar {
    display: flex;
    align-items: stretch;
    gap: 2px;
    height: 31px;
    border-top: 1px solid #282828;
    background:
      radial-gradient(12px 4px at 398px 8px, #715746, transparent),
      radial-gradient(14px 4px at 468px 2px, #5e4a3b, transparent),
      radial-gradient(26px 7px at 76% 3px, #68513f, transparent),
      radial-gradient(24px 8px at 84% 8px, #6b5442, transparent),
      radial-gradient(40px 10px at 89% 6px, #5d4939, transparent),
      linear-gradient(90deg, #9a7e67, #cba98a 8%, #e0bf9f 40%, #d8b797 75%, #aa8c72 85%, #a38469);
  }
  .start {
    width: 42px;
    margin-right: 1px;
  }
  .start svg, .program svg {
    width: 27px;
    height: 27px;
  }
  .program {
    width: 44px;
    border: 1px solid #776250;
    border-radius: 2px;
    box-shadow: inset 0 0 0 1px #f5e5d3;
    background: linear-gradient(#f0e4d8aa, #ddc0a088);
  }
  .program.current {
    background: #fff4e8bb;
  }
  .ps-tile {
    width: 22px;
    height: 20px;
    border: 2px solid #6baee8;
    background: #1d1350;
    color: #8bc8ff;
    font: 700 12px/15px "Open Sans", sans-serif;
  }
  .tray {
    position: relative;
    display: flex;
    align-items: center;
    gap: 6px;
    margin-left: auto;
  }
  .tray svg {
    width: 12px;
    height: 12px;
  }
  .clock {
    width: 54px;
    color: #fff;
    font-size: 8px;
    font-weight: 400;
    line-height: 12px;
    text-align: center;
    text-shadow: 0 0 2px #555;
  }
  .show-desktop {
    align-self: stretch;
    width: 10px;
    border: 1px solid #8b735f;
    background: #c6b09b;
  }
  .watermark {
    position: absolute;
    right: 7px;
    bottom: 3px;
    color: #ccc8c4;
    font: 400 15px/18px "Open Sans", sans-serif;
    text-shadow: 1px 1px 0 #3f372f;
  }
</style>
